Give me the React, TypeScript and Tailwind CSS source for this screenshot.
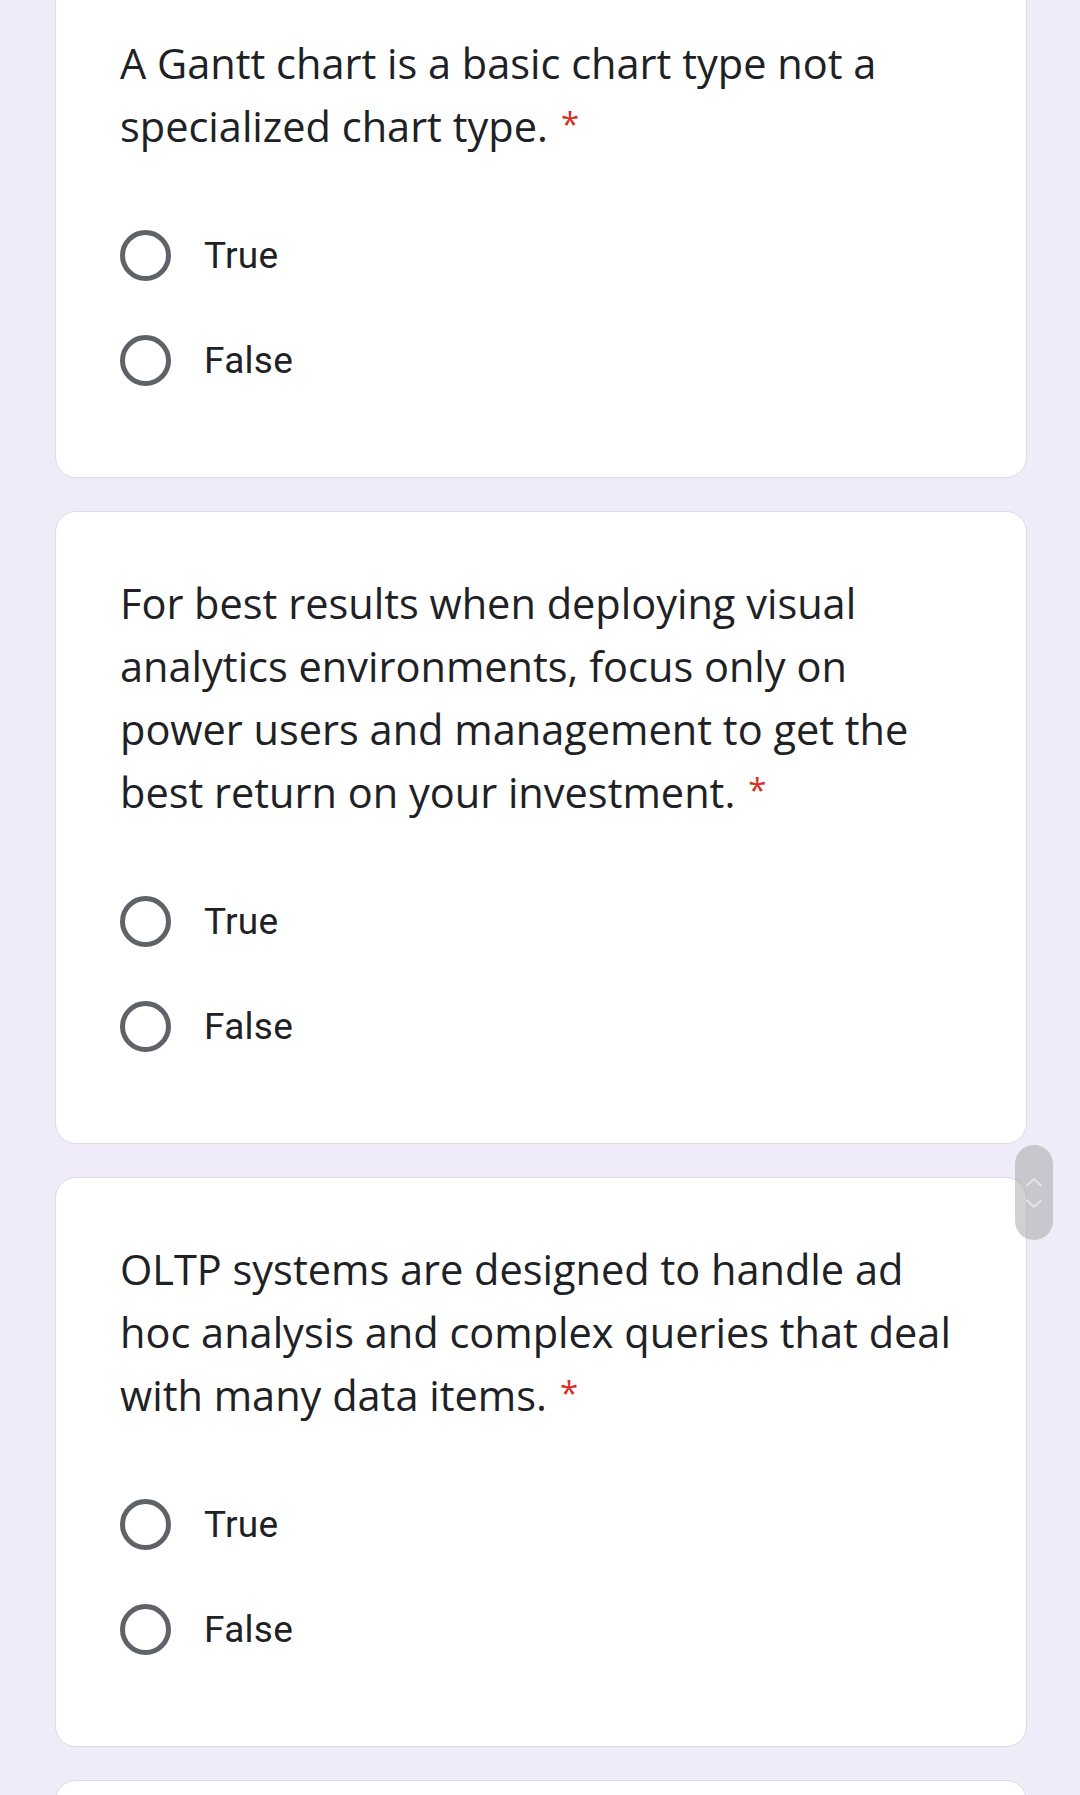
import React from "react"

type Question = { lines: string[] }

const questions: Question[] = [
  { lines: ["A Gantt chart is a basic chart type not a", "specialized chart type."] },
  {
    lines: [
      "For best results when deploying visual",
      "analytics environments, focus only on",
      "power users and management to get the",
      "best return on your investment.",
    ],
  },
  {
    lines: [
      "OLTP systems are designed to handle ad",
      "hoc analysis and complex queries that deal",
      "with many data items.",
    ],
  },
]

function Radio({ label }: { label: string }) {
  return (
    <div className="flex h-[105px] items-center">
      <div className="h-[51px] w-[51px] shrink-0 rounded-full border-[5px] border-[#5f6368]" />
      <span className="ml-[33px] font-['Roboto',sans-serif] text-[37px] leading-none tracking-[0.3px] text-[#202124]">
        {label}
      </span>
    </div>
  )
}

function QuestionCard({ q, first }: { q: Question; first?: boolean }) {
  return (
    <div
      className={`ml-[55px] w-[972px] rounded-[21px] border border-[#dadce0] bg-white pl-[64px] pr-[40px] pt-[60px] pb-[64px] ${first ? "-mt-[29px]" : ""}`}
    >
      <div className="font-['Open_Sans',sans-serif] text-[41.5px] leading-[63px] text-[#202124]">
        {q.lines.map((line, i) => (
          <div key={i} className="whitespace-nowrap">
            {line}
            {i === q.lines.length - 1 && (
              <span className="relative -top-[6px] pl-[13px] text-[33px] leading-none text-[#d93025]">*</span>
            )}
          </div>
        ))}
      </div>
      <div className="mt-[45px]">
        <Radio label="True" />
        <Radio label="False" />
      </div>
    </div>
  )
}

export default function App() {
  return (
    <div className="relative h-[1795px] w-[1080px] overflow-hidden bg-[#f0ebf8]">
      <div className="flex flex-col gap-[33px]">
        {questions.map((q, i) => (
          <QuestionCard key={i} q={q} first={i === 0} />
        ))}
        <div className="ml-[55px] h-[200px] w-[972px] rounded-[21px] border border-[#dadce0] bg-white" />
      </div>

      {/* floating scroll handle */}
      <div className="absolute left-[1015px] top-[1145px] flex h-[95px] w-[38px] flex-col items-center justify-center gap-[12px] rounded-full bg-[#9a9a9a]/45">
        <svg width="18" height="10" viewBox="0 0 18 10" fill="none">
          <path d="M2 8.5 9 2l7 6.5" stroke="#e4e4e6" strokeWidth="2" strokeLinecap="round" />
        </svg>
        <svg width="18" height="10" viewBox="0 0 18 10" fill="none">
          <path d="M2 1.5 9 8l7-6.5" stroke="#e4e4e6" strokeWidth="2" strokeLinecap="round" />
        </svg>
      </div>
    </div>
  )
}
